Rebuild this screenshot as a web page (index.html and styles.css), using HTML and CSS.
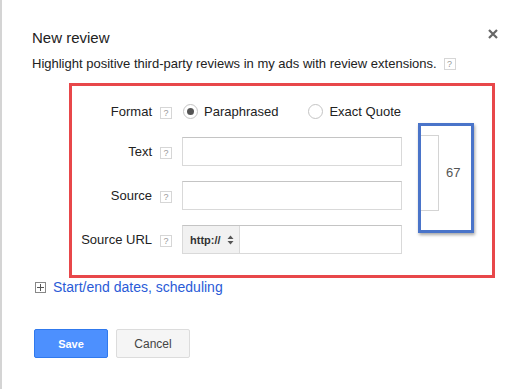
FILE: index.html
```html
<!DOCTYPE html>
<html lang="en">
<head>
    <meta charset="utf-8" />
    <title>New review</title>
    <link rel="stylesheet" href="styles.css">
</head>
<body>
<div class="dialog">
    <div class="dialog-header">
        <div class="dialog-title">New review</div>
        <svg class="close" width="10" height="10" viewBox="0 0 10 10">
            <path d="M1 1 L9 9 M9 1 L1 9" stroke="#666" stroke-width="2.2" />
        </svg>
    </div>

    <div class="intro">
        Highlight positive third-party reviews in my ads with review extensions.
        <span class="help">?</span>
    </div>

    <!-- form area, outlined in red -->
    <div class="form-box">
        <div class="form-grid">
            <div class="label">Format</div>
            <div><span class="help">?</span></div>
            <div class="radios">
                <label class="radio"><span class="dot checked"></span>Paraphrased</label>
                <label class="radio"><span class="dot"></span>Exact Quote</label>
            </div>

            <div class="label">Text</div>
            <div><span class="help">?</span></div>
            <div class="field"></div>

            <div class="label">Source</div>
            <div><span class="help">?</span></div>
            <div class="field"></div>

            <div class="label">Source URL</div>
            <div><span class="help">?</span></div>
            <div class="field url-field">
                <div class="protocol">http://
                    <svg width="7" height="10" viewBox="0 0 7 10">
                        <path d="M0.5 4 L3.5 0.5 L6.5 4 Z M0.5 6 L3.5 9.5 L6.5 6 Z" fill="#555" />
                    </svg>
                </div>
            </div>
        </div>

        <!-- character counter, outlined in blue -->
        <div class="counter-box">
            <div class="counter-field"></div>
            <div class="counter">67</div>
        </div>
    </div>

    <div class="more">
        <span class="plus-box">
            <svg width="7" height="7" viewBox="0 0 7 7">
                <path d="M3.5 0 V7 M0 3.5 H7" stroke="#555" stroke-width="1" />
            </svg>
        </span>
        <a href="#" class="more-link">Start/end dates, scheduling</a>
    </div>

    <div class="buttons">
        <button class="btn btn-save">Save</button>
        <button class="btn btn-cancel">Cancel</button>
    </div>
</div>
</body>
</html>
```
FILE: styles.css
```css
/* Page: white dialog with a thin grey edge on the left */
body {
    margin: 0;
    background-color: #fff;
    color: #222;
    font-family: "Liberation Sans", Arial, sans-serif;
    font-size: 13px;
}
.dialog {
    min-height: 100vh;
    box-sizing: border-box;
    border-left: 2px solid #d4d4d4;
    padding: 28px 26px 0 30px;
}
.dialog-header {
    display: flex;
    justify-content: space-between;
    align-items: flex-start;
}
.dialog-title {
    font-size: 15px;
    line-height: 20px;
    color: #222;
}
.close {
    margin-top: 1px;
}
.intro {
    margin-top: 8px;
    line-height: 16px;
    display: flex;
    align-items: center;
}
/* Small question-mark help box */
.help {
    display: inline-flex;
    align-items: center;
    justify-content: center;
    width: 10px;
    height: 10px;
    border: 1px solid #d6d6d6;
    color: #9a9a9a;
    font-size: 9px;
    line-height: 10px;
    margin-left: 7px;
}
.form-grid .help {
    margin-left: 0;
}
/* Red outline around the form */
.form-box {
    position: relative;
    box-sizing: border-box;
    width: 426px;
    margin: 11px 0 0 37px;
    border: 3px solid #e8474a;
    padding: 14px 0 21px 0;
}
.form-grid {
    display: grid;
    grid-template-columns: 88px 22px 220px;
    row-gap: 15px;
    align-items: center;
}
.label {
    text-align: right;
    padding-right: 8px;
    color: #222;
}
.radios {
    display: flex;
    align-items: center;
    height: 22px;
    white-space: nowrap;
}
.radio {
    display: flex;
    align-items: center;
    flex-shrink: 0;
    margin-right: 29px;
}
.dot {
    box-sizing: border-box;
    width: 15px;
    height: 15px;
    border: 1px solid #c4c4c4;
    border-radius: 50%;
    margin: 0 6px 0 1px;
    display: inline-flex;
    align-items: center;
    justify-content: center;
}
.dot.checked::after {
    content: "";
    width: 7px;
    height: 7px;
    border-radius: 50%;
    background-color: #555;
}
.field {
    box-sizing: border-box;
    height: 29px;
    border: 1px solid #d9d9d9;
    border-top-color: #c4c4c4;
    background-color: #fff;
}
.url-field {
    display: flex;
}
.protocol {
    width: 57px;
    box-sizing: border-box;
    background-color: #f1f1f1;
    border-right: 1px solid #d9d9d9;
    display: flex;
    align-items: center;
    gap: 6px;
    padding-left: 7px;
    font-size: 11px;
    font-weight: bold;
    color: #333;
}
/* Blue outline around the character counter */
.counter-box {
    position: absolute;
    left: 346px;
    top: 37px;
    width: 56px;
    height: 110px;
    box-sizing: border-box;
    border: 3px solid #4a74c9;
    box-shadow: 1px 2px 3px rgba(0, 0, 0, 0.35);
    display: flex;
    align-items: flex-start;
}
.counter-field {
    width: 18px;
    height: 76px;
    box-sizing: border-box;
    margin-top: 9px;
    border: 1px solid #d4d4d4;
    border-left: none;
}
.counter {
    margin: 39px 0 0 7px;
    color: #555;
    font-size: 13px;
    line-height: 15px;
}
.more {
    display: flex;
    align-items: center;
    margin: 1px 0 0 3px;
    line-height: 16px;
}
.plus-box {
    display: inline-flex;
    align-items: center;
    justify-content: center;
    width: 9px;
    height: 9px;
    border: 1px solid #888;
    margin-right: 7px;
}
.more-link {
    color: #2a5bd7;
    text-decoration: none;
    font-size: 14px;
}
.buttons {
    display: flex;
    gap: 8px;
    margin: 34px 0 0 2px;
}
.btn {
    width: 74px;
    height: 29px;
    border-radius: 2px;
    font-family: "Liberation Sans", Arial, sans-serif;
    font-size: 11px;
    font-weight: bold;
    cursor: pointer;
}
.btn-save {
    background-color: #4d90fe;
    border: 1px solid #3079ed;
    color: #fff;
}
.btn-cancel {
    background-color: #f5f5f5;
    border: 1px solid #dcdcdc;
    color: #444;
    font-size: 12px;
    font-weight: normal;
}
```
